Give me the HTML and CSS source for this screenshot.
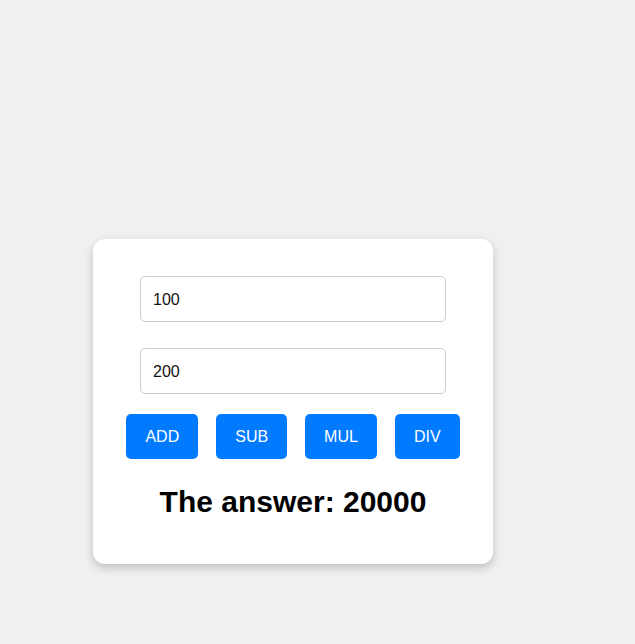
FILE: index.html
```html
<!DOCTYPE html>
<html>
<head>
<meta charset="utf-8">
<link rel="stylesheet" href="styles.css">
</head>
<body>
<div class="card">
  <input class="field" type="text" value="100">
  <input class="field second" type="text" value="200">
  <div class="buttons">
    <button class="btn">ADD</button>
    <button class="btn">SUB</button>
    <button class="btn">MUL</button>
    <button class="btn">DIV</button>
  </div>
  <h2 class="answer">The answer: 20000</h2>
</div>
</body>
</html>
```
FILE: styles.css
```css
html, body {
  margin: 0;
  background: #f0f0f0;
  font-family: "Liberation Sans", Arial, sans-serif;
}
body {
  padding: 239px 0 0 93px;
  height: 644px;
  box-sizing: border-box;
}
.card {
  width: 400px;
  height: 325px;
  box-sizing: border-box;
  background: #fff;
  border-radius: 12px;
  box-shadow: 0 4px 10px rgba(0, 0, 0, 0.2);
  padding-top: 37px;
  display: flex;
  flex-direction: column;
  align-items: center;
}
.field {
  width: 306px;
  height: 46px;
  box-sizing: border-box;
  border: 1px solid #ccc;
  border-radius: 5px;
  padding: 2px 12px 0;
  font-family: "Liberation Sans", Arial, sans-serif;
  font-size: 16px;
  color: #111;
  margin: 0 0 26px;
  outline: none;
}
.field.second {
  margin-bottom: 20px;
}
.buttons {
  display: flex;
  gap: 18px;
}
.btn {
  height: 45px;
  padding: 0 19px;
  border: none;
  border-radius: 5px;
  background: #007bff;
  color: #fff;
  font-family: "Liberation Sans", Arial, sans-serif;
  font-size: 16px;
}
.answer {
  margin: 26px 0 0;
  font-size: 30px;
  font-weight: bold;
  color: #000;
}
```
